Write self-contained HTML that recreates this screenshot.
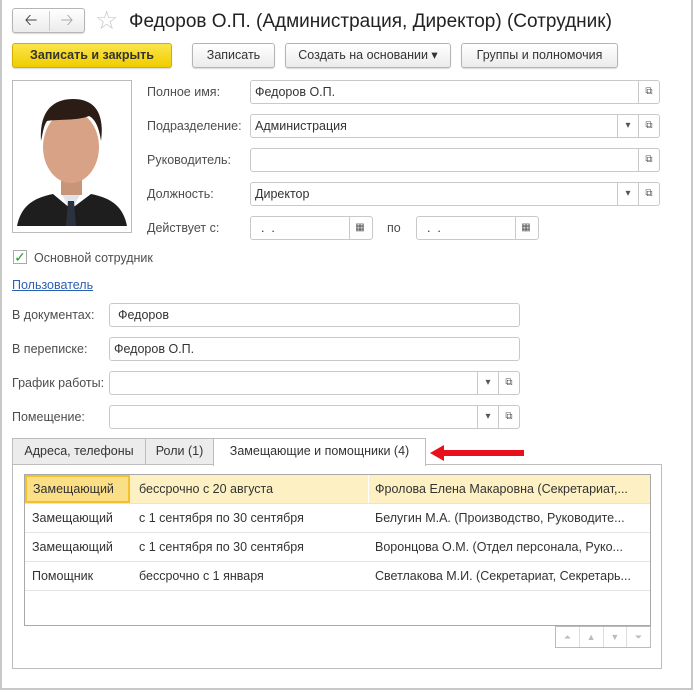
<html><head><style>
*{box-sizing:border-box}
body{margin:0;width:693px;height:690px;background:#fff;font-family:"Liberation Sans",Arial,sans-serif;font-size:12.5px;color:#333;position:relative;overflow:hidden}
.a{position:absolute}
.win{left:0;top:0;width:693px;height:690px;border:2px solid #c8c8c8;border-top:0}
.btn{position:absolute;height:25px;border:1px solid #b5b5b5;border-radius:3px;background:linear-gradient(#fff,#ebebeb);text-align:center;line-height:23px;color:#333;box-shadow:0 1px 1px rgba(0,0,0,.15);white-space:nowrap}
.lbl{position:absolute;color:#4d4d4d;line-height:16px;white-space:nowrap}
.inp{position:absolute;height:24px;border:1px solid #c9c9c9;border-radius:3px;background:#fff;line-height:22px;padding-left:4px;color:#333}
.sep{position:absolute;top:0;height:22px;border-left:1px solid #c9c9c9}
.pk{position:absolute;top:0;width:20px;height:22px;text-align:center;font-size:10px;color:#555}
.tab{position:absolute;top:438px;height:27px;border:1px solid #bdbdbd;background:#ececec;line-height:25px;text-align:center;color:#333;white-space:nowrap}
.row{position:absolute;left:25px;width:625px;height:29px;border-bottom:1px solid #e4e4e4;line-height:29px;white-space:nowrap}
.row span{position:absolute}
</style></head><body>
<div class="a win"></div>
<div class="btn" style="left:12px;top:8px;width:73px;height:25px;padding:0"><span class="a" style="left:0;top:0;width:36px;font-size:16px;color:#444">&#129120;</span><span class="a" style="left:36px;top:2px;height:20px;border-left:1px solid #ccc"></span><span class="a" style="left:36px;top:0;width:36px;font-size:16px;color:#aaa">&#129122;</span></div>
<div class="a" style="left:95px;top:6px;font-size:26px;color:#c8c8c8;line-height:28px">☆</div>
<div class="a" style="left:129px;top:10px;font-size:19px;color:#222;line-height:24px;white-space:nowrap">Федоров О.П. (Администрация, Директор) (Сотрудник)</div>
<div class="btn" style="left:12px;top:43px;width:160px;background:linear-gradient(#fbe54a,#f0cd00);border-color:#d1b000;font-weight:bold;color:#333">Записать и закрыть</div>
<div class="btn" style="left:192px;top:43px;width:83px">Записать</div>
<div class="btn" style="left:285px;top:43px;width:166px">Создать на основании &#9662;</div>
<div class="btn" style="left:461px;top:43px;width:157px">Группы и полномочия</div>
<div class="a" style="left:12px;top:80px;width:120px;height:153px;border:1px solid #bbb;background:#fff">
<svg width="118" height="151" viewBox="0 0 118 151"><path d="M4 145 C8 125 20 117 40 113 L58 128 L78 113 C98 117 110 125 114 145Z" fill="#1e1e1e"/><path d="M48 112 L58 130 L68 112Z" fill="#dfe3ea"/><path d="M55 120 L61 120 L63 145 L53 145Z" fill="#2a3140"/><rect x="48" y="92" width="21" height="22" fill="#c99578"/><ellipse cx="58" cy="66" rx="28" ry="36" fill="#d7a285"/><path d="M28 60 C26 28 42 18 60 18 C80 18 92 30 88 60 C86 46 82 38 76 35 C64 40 44 38 34 40 C30 46 30 52 28 60Z" fill="#2b1d16"/></svg></div>
<div class="lbl" style="left:147px;top:84px">Полное имя:</div>
<div class="inp" style="left:250px;top:80px;width:410px">Федоров О.П.<div class="sep" style="left:387px"></div><div class="pk" style="left:388px">⧉</div></div>
<div class="lbl" style="left:147px;top:118px">Подразделение:</div>
<div class="inp" style="left:250px;top:114px;width:410px">Администрация<div class="sep" style="left:366px"></div><div class="pk" style="left:367px">▾</div><div class="sep" style="left:387px"></div><div class="pk" style="left:388px">⧉</div></div>
<div class="lbl" style="left:147px;top:152px">Руководитель:</div>
<div class="inp" style="left:250px;top:148px;width:410px"><div class="sep" style="left:387px"></div><div class="pk" style="left:388px">⧉</div></div>
<div class="lbl" style="left:147px;top:186px">Должность:</div>
<div class="inp" style="left:250px;top:182px;width:410px">Директор<div class="sep" style="left:366px"></div><div class="pk" style="left:367px">▾</div><div class="sep" style="left:387px"></div><div class="pk" style="left:388px">⧉</div></div>
<div class="lbl" style="left:147px;top:220px">Действует с:</div>
<div class="inp" style="left:250px;top:216px;width:123px;padding-left:10px">.&nbsp;&nbsp;.<div class="sep" style="left:98px"></div><div class="pk" style="left:99px">▦</div></div>
<div class="lbl" style="left:387px;top:220px">по</div>
<div class="inp" style="left:416px;top:216px;width:123px;padding-left:10px">.&nbsp;&nbsp;.<div class="sep" style="left:98px"></div><div class="pk" style="left:99px">▦</div></div>
<div class="a" style="left:13px;top:250px;width:14px;height:14px;border:1px solid #aaa;background:#fff;color:#2a9a2a;font-size:14px;line-height:12px;text-align:center">✓</div>
<div class="lbl" style="left:34px;top:250px">Основной сотрудник</div>
<div class="lbl" style="left:12px;top:277px;color:#2b5fb4;text-decoration:underline">Пользователь</div>
<div class="lbl" style="left:12px;top:307px">В документах:</div>
<div class="inp" style="left:109px;top:303px;width:411px;padding-left:8px">Федоров</div>
<div class="lbl" style="left:12px;top:341px">В переписке:</div>
<div class="inp" style="left:109px;top:337px;width:411px">Федоров О.П.</div>
<div class="lbl" style="left:12px;top:375px">График работы:</div>
<div class="inp" style="left:109px;top:371px;width:411px"><div class="sep" style="left:367px"></div><div class="pk" style="left:368px">▾</div><div class="sep" style="left:388px"></div><div class="pk" style="left:389px">⧉</div></div>
<div class="lbl" style="left:12px;top:409px">Помещение:</div>
<div class="inp" style="left:109px;top:405px;width:411px"><div class="sep" style="left:367px"></div><div class="pk" style="left:368px">▾</div><div class="sep" style="left:388px"></div><div class="pk" style="left:389px">⧉</div></div>
<div class="a" style="left:12px;top:464px;width:650px;height:205px;border:1px solid #bdbdbd"></div>
<div class="tab" style="left:12px;width:134px">Адреса, телефоны</div>
<div class="tab" style="left:145px;width:69px">Роли (1)</div>
<div class="tab" style="left:213px;width:213px;height:28px;background:#fff;border-bottom:0">Замещающие и помощники (4)</div>
<svg class="a" style="left:428px;top:443px" width="98" height="20"><path d="M2 10 L16 2 L16 7 L96 7 L96 13 L16 13 L16 18Z" fill="#e8101a"/></svg>
<div class="a" style="left:24px;top:474px;width:627px;height:152px;border:1px solid #a8a8a8"></div>
<div class="row" style="top:475px;background:#fdf1c4"><span style="left:0;top:0;width:105px;height:28px;background:#fbdf86;border:2px solid #f3c12e;line-height:24px;padding-left:6px">Замещающий</span><span style="left:114px">бессрочно с 20 августа</span><span style="left:343px;top:0;bottom:0;border-left:1px solid #fff"></span><span style="left:350px">Фролова Елена Макаровна (Секретариат,...</span></div>
<div class="row" style="top:504px"><span style="left:7px">Замещающий</span><span style="left:114px">с 1 сентября по 30 сентября</span><span style="left:350px">Белугин М.А. (Производство, Руководите...</span></div>
<div class="row" style="top:533px"><span style="left:7px">Замещающий</span><span style="left:114px">с 1 сентября по 30 сентября</span><span style="left:350px">Воронцова О.М. (Отдел персонала, Руко...</span></div>
<div class="row" style="top:562px"><span style="left:7px">Помощник</span><span style="left:114px">бессрочно с 1 января</span><span style="left:350px">Светлакова М.И. (Секретариат, Секретарь...</span></div>
<div class="a" style="left:555px;top:626px;width:96px;height:22px;border:1px solid #bbb;display:flex;font-size:9px;color:#bbb">
<div style="flex:1;text-align:center;line-height:20px;border-right:1px solid #ddd">⏶</div><div style="flex:1;text-align:center;line-height:20px;border-right:1px solid #ddd">▲</div><div style="flex:1;text-align:center;line-height:20px;border-right:1px solid #ddd">▼</div><div style="flex:1;text-align:center;line-height:20px">⏷</div></div>
</body></html>
